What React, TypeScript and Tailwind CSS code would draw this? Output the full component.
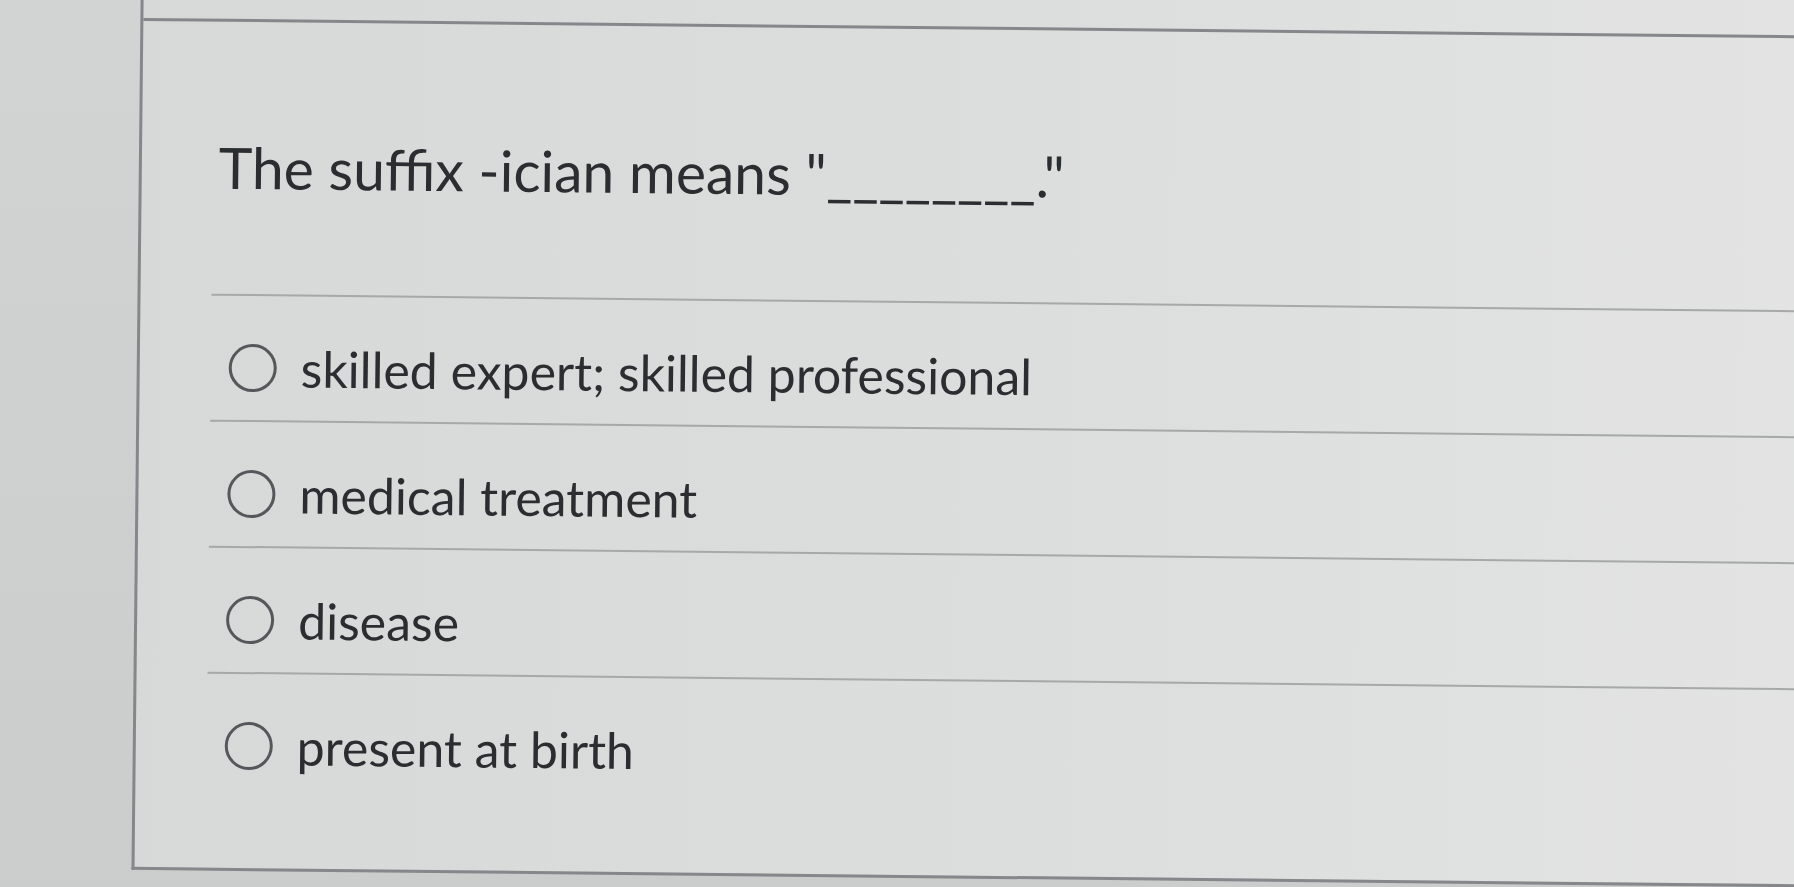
const options = [
  "skilled expert; skilled professional",
  "medical treatment",
  "disease",
  "present at birth",
];

function Radio() {
  return (
    <span className="block w-[48px] h-[48px] shrink-0 rounded-full border-[3px] border-[#55585b]" />
  );
}

export default function App() {
  return (
    <div
      className="w-[1794px] h-[887px] overflow-hidden bg-gradient-to-b from-[#d2d3d3] to-[#cbcccc] text-[#2b2e31]"
      style={{ fontFamily: "Lato, 'Liberation Sans', sans-serif" }}
    >
      {/* the photo is tilted a little, so the whole sheet is turned to match */}
      <div className="-ml-[40px] -mt-[40px] w-[1960px] pl-[181px] origin-top-left rotate-[0.6deg]">
        <div className="flex flex-col border-l-[3px] border-b-[3px] border-[#85878a] bg-gradient-to-r from-[#d7d8d8] via-[#dcdddd] to-[#e3e4e3]">
          <div className="h-[56px]" />
          <div className="border-t-[3px] border-[#85878a] pl-[71px]">
            <div className="h-[272px] pt-[111px] pl-[6px]">
              <p className="text-[57px] leading-[68px]">
                The suffix -ician means "________."
              </p>
            </div>
            {options.map((o) => (
              <div
                key={o}
                className="h-[126px] border-t-2 border-[#a6a8a9] pt-[46px] pl-[18px]"
              >
                <div className="flex items-center gap-[24px]">
                  <Radio />
                  <span className="text-[50px] leading-[52px]">{o}</span>
                </div>
              </div>
            ))}
            <div className="h-[70px]" />
          </div>
        </div>
      </div>
    </div>
  );
}
